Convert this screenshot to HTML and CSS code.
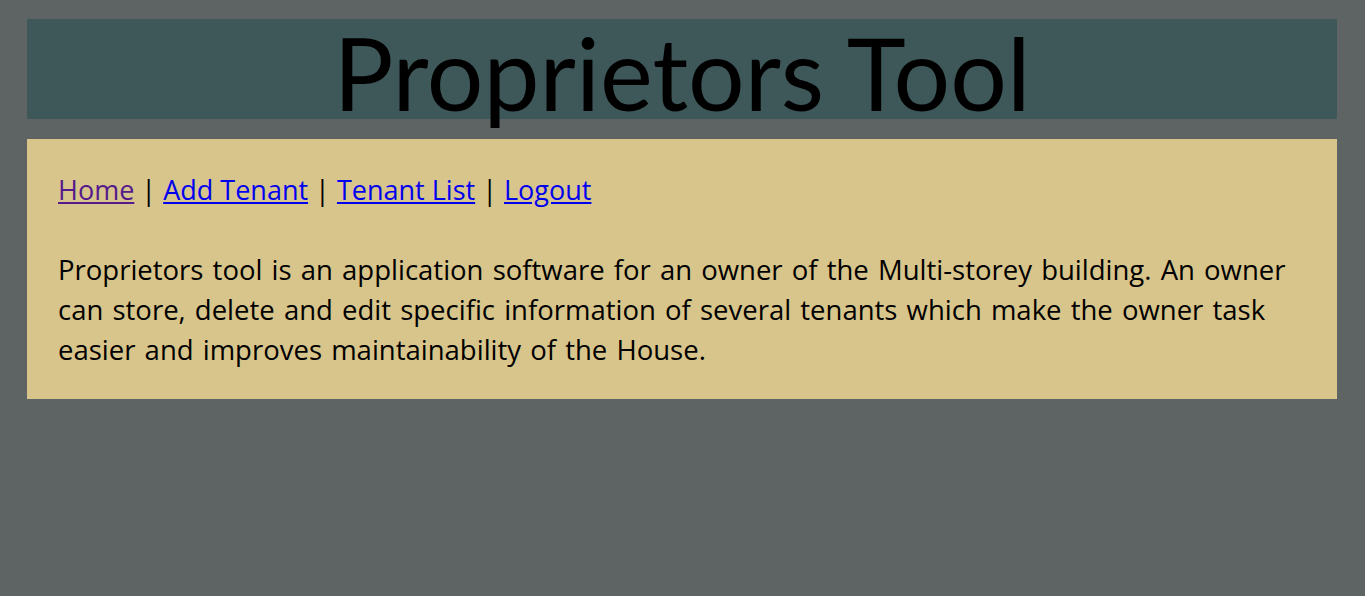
FILE: index.html
```html
<!DOCTYPE html>
<html>
<head>
<meta charset="utf-8">
<link rel="stylesheet" href="styles.css">
</head>
<body>
<div class="page">
  <header class="banner"><h1 class="title">Proprietors Tool</h1></header>
  <main class="content">
    <nav class="nav"><a class="visited" href="#">Home</a> | <a href="#">Add Tenant</a> | <a href="#">Tenant List</a> | <a href="#">Logout</a></nav>
    <p class="about">Proprietors tool is an application software for an owner of the Multi-storey building. An owner can store, delete and edit specific information of several tenants which make the owner task easier and improves maintainability of the House.</p>
  </main>
</div>
</body>
</html>
```
FILE: styles.css
```css
html, body { margin: 0; padding: 0; }
body { background: #5e6464; }
.page { padding: 19px 28px 0 27px; display: flex; flex-direction: column; gap: 20px; }
.banner { background: #3e5759; height: 100px; display: flex; justify-content: center; }
.title { margin: 0; font-family: Lato, "Gill Sans", sans-serif; font-weight: 400; font-size: 100px; line-height: 106px; color: #000; white-space: nowrap; }
.content { background: #d8c58b; padding: 31px 31px 29px; font-family: "Open Sans", "Segoe UI", sans-serif; font-size: 27.5px; line-height: 40px; color: #000; }
.nav { margin: 0 0 40px; font-size: 27px; }
.nav a { color: #0000ee; }
.nav a.visited { color: #551a8b; }
.about { margin: 0; word-spacing: 2px; }
```
